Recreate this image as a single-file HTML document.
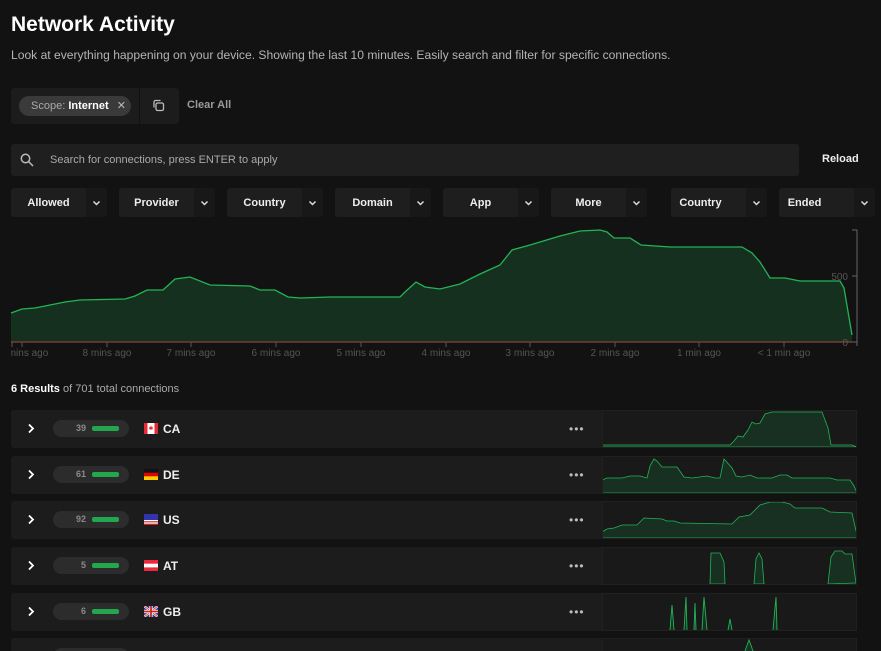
<!DOCTYPE html>
<html style="overflow:hidden;height:651px"><head><meta charset="utf-8"><style>
*{box-sizing:border-box;margin:0;padding:0}
body{width:881px;height:651px;background:#121212;font-family:"Liberation Sans",Arial,sans-serif;color:#e6e6e6;position:relative;overflow:hidden}
.a{position:absolute}
h1{position:absolute;left:11px;top:13px;font-size:21px;font-weight:bold;color:#fff}
.sub{left:11px;top:48px;font-size:12.1px;color:#b4b4b4}
.btn{position:absolute;top:188px;height:29px;background:#1e1e1e;border-radius:3px;font-size:11px;font-weight:bold;color:#eee}
.btn .l{position:absolute;left:0;top:0;bottom:0;display:flex;align-items:center;justify-content:center}
.btn .c{position:absolute;right:0;top:0;bottom:0;width:21px;background:#181818;border-radius:0 3px 3px 0;display:flex;align-items:center;justify-content:center}
.row{position:absolute;left:11px;width:846px;height:38px;background:#1c1c1c;border-radius:3px}
.chev{position:absolute;left:16px;top:13px}
.pill{position:absolute;left:42px;top:10px;width:76px;height:17px;background:#2c2c2c;border-radius:9px}
.pill span{position:absolute;right:43px;top:3px;font-size:9px;color:#8a8a8a;font-weight:bold}
.pill i{position:absolute;left:39px;top:6px;width:27px;height:5px;background:#22a74f;border-radius:2px}
.cc{position:absolute;left:152px;top:12px;font-size:12px;font-weight:bold;color:#eee}
.flag{position:absolute;left:133px;top:13px;width:14px;height:11px}
.dots{position:absolute;left:558px;top:12px;font-size:12px;color:#bbb;letter-spacing:1px}
.sp{position:absolute;left:591px;top:0;width:255px;height:38px;background:#191919;outline:1px solid #202020;outline-offset:-1px}
.tl{position:absolute;top:348px;font-size:10px;color:#555;transform:translateX(-50%);white-space:nowrap}
</style></head><body>
<h1>Network Activity</h1>
<div class="a sub">Look at everything happening on your device. Showing the last 10 minutes. Easily search and filter for specific connections.</div>

<div class="a" style="left:11px;top:88px;width:168px;height:36px;background:#1c1c1c;border-radius:3px"></div>
<div class="a" style="left:139px;top:88px;width:1px;height:36px;background:#121212"></div>
<div class="a" style="left:19px;top:96px;width:112px;height:20px;background:#3a3a3a;border-radius:10px;font-size:11px;line-height:20px;padding-left:12px;color:#aaa">Scope: <b style="color:#fff">Internet</b> <span style="margin-left:5px;color:#bbb">✕</span></div>
<svg class="a" style="left:152px;top:99px" width="13" height="13" viewBox="0 0 13 13" fill="none" stroke="#bbb" stroke-width="1.3"><rect x="4" y="4" width="7.5" height="7.5" rx="1.5"/><path d="M2 8.5V3a1.5 1.5 0 0 1 1.5-1.5H8.5"/></svg>
<div class="a" style="left:187px;top:99px;font-size:11px;font-weight:bold;color:#9a9a9a">Clear All</div>

<div class="a" style="left:11px;top:144px;width:788px;height:32px;background:#1f1f1f;border-radius:3px"></div>
<svg class="a" style="left:20px;top:153px" width="14" height="14" viewBox="0 0 14 14" fill="none" stroke="#bbb" stroke-width="1.5"><circle cx="5.5" cy="5.5" r="4.2"/><path d="M8.6 8.6L13 13"/></svg>
<div class="a" style="left:50px;top:154px;font-size:11px;color:#aaa">Search for connections, press ENTER to apply</div>
<div class="a" style="left:822px;top:153px;font-size:11px;font-weight:bold;color:#eee">Reload</div>

<div class="btn" style="left:11px;width:96px"><div class="l" style="width:75px">Allowed</div><div class="c"><svg width="9" height="6" viewBox="0 0 9 6"><path d="M1.5 1.5l3 3 3-3" stroke="#ddd" stroke-width="1.5" fill="none"/></svg></div></div>
<div class="btn" style="left:119px;width:96px"><div class="l" style="width:75px">Provider</div><div class="c"><svg width="9" height="6" viewBox="0 0 9 6"><path d="M1.5 1.5l3 3 3-3" stroke="#ddd" stroke-width="1.5" fill="none"/></svg></div></div>
<div class="btn" style="left:227px;width:96px"><div class="l" style="width:75px">Country</div><div class="c"><svg width="9" height="6" viewBox="0 0 9 6"><path d="M1.5 1.5l3 3 3-3" stroke="#ddd" stroke-width="1.5" fill="none"/></svg></div></div>
<div class="btn" style="left:335px;width:96px"><div class="l" style="width:75px">Domain</div><div class="c"><svg width="9" height="6" viewBox="0 0 9 6"><path d="M1.5 1.5l3 3 3-3" stroke="#ddd" stroke-width="1.5" fill="none"/></svg></div></div>
<div class="btn" style="left:443px;width:96px"><div class="l" style="width:75px">App</div><div class="c"><svg width="9" height="6" viewBox="0 0 9 6"><path d="M1.5 1.5l3 3 3-3" stroke="#ddd" stroke-width="1.5" fill="none"/></svg></div></div>
<div class="btn" style="left:551px;width:96px"><div class="l" style="width:75px">More</div><div class="c"><svg width="9" height="6" viewBox="0 0 9 6"><path d="M1.5 1.5l3 3 3-3" stroke="#ddd" stroke-width="1.5" fill="none"/></svg></div></div>
<div class="btn" style="left:671px;width:96px"><div class="l" style="width:59px">Country</div><div class="c"><svg width="9" height="6" viewBox="0 0 9 6"><path d="M1.5 1.5l3 3 3-3" stroke="#ddd" stroke-width="1.5" fill="none"/></svg></div></div>
<div class="btn" style="left:779px;width:96px"><div class="l" style="width:51px">Ended</div><div class="c"><svg width="9" height="6" viewBox="0 0 9 6"><path d="M1.5 1.5l3 3 3-3" stroke="#ddd" stroke-width="1.5" fill="none"/></svg></div></div>

<svg class="a" style="left:0;top:0" width="881" height="370">
<path d="M11,313 L22,309 L35,308 L50,305 L65,302 L80,300 L125,299 L135,296 L147,290 L163,290 L175,279 L190,277 L210,285 L250,286 L260,290 L275,290 L288,297 L300,298 L330,297 L400,297 L405,292 L416,282 L425,287 L440,289 L460,284 L480,274 L500,265 L512,250 L530,245 L560,236 L580,231 L600,230 L607,232 L614,238 L630,238 L641,245 L670,247 L742,247 L752,253 L760,262 L770,278 L785,278 L800,281 L840,281 L844,288 L852,335 L852,342 L11,342 Z" fill="#163020" stroke="none"/>
<path d="M11,313 L22,309 L35,308 L50,305 L65,302 L80,300 L125,299 L135,296 L147,290 L163,290 L175,279 L190,277 L210,285 L250,286 L260,290 L275,290 L288,297 L300,298 L330,297 L400,297 L405,292 L416,282 L425,287 L440,289 L460,284 L480,274 L500,265 L512,250 L530,245 L560,236 L580,231 L600,230 L607,232 L614,238 L630,238 L641,245 L670,247 L742,247 L752,253 L760,262 L770,278 L785,278 L800,281 L840,281 L844,288 L852,335" fill="none" stroke="#22b455" stroke-width="1.3"/>
<line x1="11" y1="342" x2="852" y2="342" stroke="#7a3a30" stroke-width="1.5"/>
<path d="M852,230H857V346M852,276H857M852,342H857" stroke="#666" fill="none"/>
<path d="M12,342v5M22,342v5M107,342v5M191,342v5M276,342v5M361,342v5M446,342v5M530,342v5M615,342v5M699,342v5M784,342v5" stroke="#555"/>
<text x="848" y="280" font-size="10" fill="#555" text-anchor="end" font-family="Liberation Sans">500</text>
<text x="848" y="346" font-size="10" fill="#555" text-anchor="end" font-family="Liberation Sans">0</text>
</svg>
<div class="tl" style="left:28px">mins ago</div>
<div class="tl" style="left:107px">8 mins ago</div>
<div class="tl" style="left:191px">7 mins ago</div>
<div class="tl" style="left:276px">6 mins ago</div>
<div class="tl" style="left:361px">5 mins ago</div>
<div class="tl" style="left:446px">4 mins ago</div>
<div class="tl" style="left:530px">3 mins ago</div>
<div class="tl" style="left:615px">2 mins ago</div>
<div class="tl" style="left:699px">1 min ago</div>
<div class="tl" style="left:784px">&lt; 1 min ago</div>
<div class="a" style="left:0;top:347px;width:11px;height:14px;background:#121212"></div>

<div class="a" style="left:11px;top:383px;font-size:11px;color:#aaa"><b style="color:#fff">6 Results</b> of 701 total connections</div>

<div class="row" style="top:410px">
<svg class="chev" width="8" height="11" viewBox="0 0 8 11"><path d="M2 1.5l4 4-4 4" stroke="#fff" stroke-width="1.8" fill="none"/></svg>
<div class="pill"><span>39</span><i></i></div>
<svg class="flag" viewBox="0 0 14 11"><rect width="14" height="11" fill="#fff"/><rect width="3.5" height="11" fill="#e52b34"/><rect x="10.5" width="3.5" height="11" fill="#e52b34"/><path d="M7 2.5l1 2 1-.5-.5 2.5h-3L5 4l1 .5z" fill="#e52b34"/></svg>
<div class="cc">CA</div><div class="dots">•••</div>
<svg class="sp" viewBox="0 0 255 38" preserveAspectRatio="none"><path d="M0,37 L0,35 L128,35 L132,31 L136,26 L141,27 L146,20 L150,12 L154,14 L158,13 L163,4 L170,2 L220,2 L226,18 L229,35 L250,35 L255,37 Z" fill="#173021" stroke="#22b455" stroke-width="0.8"/><line x1="0" y1="37.5" x2="255" y2="37.5" stroke="#7a3a30"/></svg>
</div>
<div class="row" style="top:456px">
<svg class="chev" width="8" height="11" viewBox="0 0 8 11"><path d="M2 1.5l4 4-4 4" stroke="#fff" stroke-width="1.8" fill="none"/></svg>
<div class="pill"><span>61</span><i></i></div>
<svg class="flag" viewBox="0 0 14 11"><rect width="14" height="3.7" fill="#111"/><rect y="3.7" width="14" height="3.7" fill="#d00"/><rect y="7.3" width="14" height="3.7" fill="#fc0"/></svg>
<div class="cc">DE</div><div class="dots">•••</div>
<svg class="sp" viewBox="0 0 255 38" preserveAspectRatio="none"><path d="M0,37 L0,24 L5,22 L20,22 L28,20 L38,20 L45,22 L48,10 L52,3 L55,5 L60,11 L75,11 L82,21 L90,22 L105,20 L113,22 L118,22 L122,3 L130,12 L134,20 L140,21 L148,19 L155,22 L170,22 L178,19 L185,19 L190,22 L228,22 L235,24 L248,24 L252,30 L255,37 Z" fill="#173021" stroke="#22b455" stroke-width="0.8"/><line x1="0" y1="37.5" x2="255" y2="37.5" stroke="#7a3a30"/></svg>
</div>
<div class="row" style="top:501px">
<svg class="chev" width="8" height="11" viewBox="0 0 8 11"><path d="M2 1.5l4 4-4 4" stroke="#fff" stroke-width="1.8" fill="none"/></svg>
<div class="pill"><span>92</span><i></i></div>
<svg class="flag" viewBox="0 0 14 11"><rect width="14" height="11" fill="#fff"/><path d="M0 0h14v1.2H0zM0 2.4h14v1.2H0zM0 4.8h14v1.2H0zM0 7.2h14v1.2H0zM0 9.6h14v1.4H0z" fill="#c22"/><rect width="14" height="6" fill="#33a"/></svg>
<div class="cc">US</div><div class="dots">•••</div>
<svg class="sp" viewBox="0 0 255 38" preserveAspectRatio="none"><path d="M0,37 L0,31 L5,28 L12,27 L20,24 L35,24 L42,17 L60,18 L65,20 L72,20 L78,22 L130,23 L137,16 L148,14 L152,10 L158,4 L168,1 L180,1 L188,3 L193,7 L220,7 L228,11 L250,12 L255,34 L255,37 Z" fill="#173021" stroke="#22b455" stroke-width="0.8"/><line x1="0" y1="37.5" x2="255" y2="37.5" stroke="#7a3a30"/></svg>
</div>
<div class="row" style="top:547px">
<svg class="chev" width="8" height="11" viewBox="0 0 8 11"><path d="M2 1.5l4 4-4 4" stroke="#fff" stroke-width="1.8" fill="none"/></svg>
<div class="pill"><span>5</span><i></i></div>
<svg class="flag" viewBox="0 0 14 11"><rect width="14" height="11" fill="#ed2939"/><rect y="3.7" width="14" height="3.7" fill="#fff"/></svg>
<div class="cc">AT</div><div class="dots">•••</div>
<svg class="sp" viewBox="0 0 255 38" preserveAspectRatio="none"><path d="M108,37 L109,6 L118,6 L122,15 L123,37 Z M152,37 L154,12 L157,6 L160,12 L162,37 Z M226,37 L229,10 L233,4 L240,4 L243,7 L250,7 L254,36 Z" fill="#173021" stroke="#22b455" stroke-width="0.8"/><line x1="0" y1="37.5" x2="255" y2="37.5" stroke="#7a4a20"/></svg>
</div>
<div class="row" style="top:593px">
<svg class="chev" width="8" height="11" viewBox="0 0 8 11"><path d="M2 1.5l4 4-4 4" stroke="#fff" stroke-width="1.8" fill="none"/></svg>
<div class="pill"><span>6</span><i></i></div>
<svg class="flag" viewBox="0 0 14 11"><rect width="14" height="11" fill="#2a3b8f"/><path d="M0 0L14 11M14 0L0 11" stroke="#fff" stroke-width="2.2"/><path d="M0 0L14 11M14 0L0 11" stroke="#c22" stroke-width="0.8"/><path d="M7 0v11M0 5.5h14" stroke="#fff" stroke-width="3.2"/><path d="M7 0v11M0 5.5h14" stroke="#c22" stroke-width="1.8"/></svg>
<div class="cc">GB</div><div class="dots">•••</div>
<svg class="sp" viewBox="0 0 255 38" preserveAspectRatio="none"><path d="M68,37 L70,12 L72,37 M82,37 L84,4 L85,37 M92,37 L93,10 L94,37 M100,37 L102,4 L105,37 M126,37 L128,26 L130,37 M171,37 L174,4 L175,37" fill="#173021" stroke="#22b455" stroke-width="0.9"/><line x1="0" y1="37.5" x2="255" y2="37.5" stroke="#8a4a20"/></svg>
</div>
<div class="row" style="top:638px">
<div class="pill"></div>
<svg class="sp" viewBox="0 0 255 38" preserveAspectRatio="none"><path d="M143,13 L147,2 L151,13" fill="#173021" stroke="#22b455" stroke-width="0.9"/></svg>
</div>
</body></html>
